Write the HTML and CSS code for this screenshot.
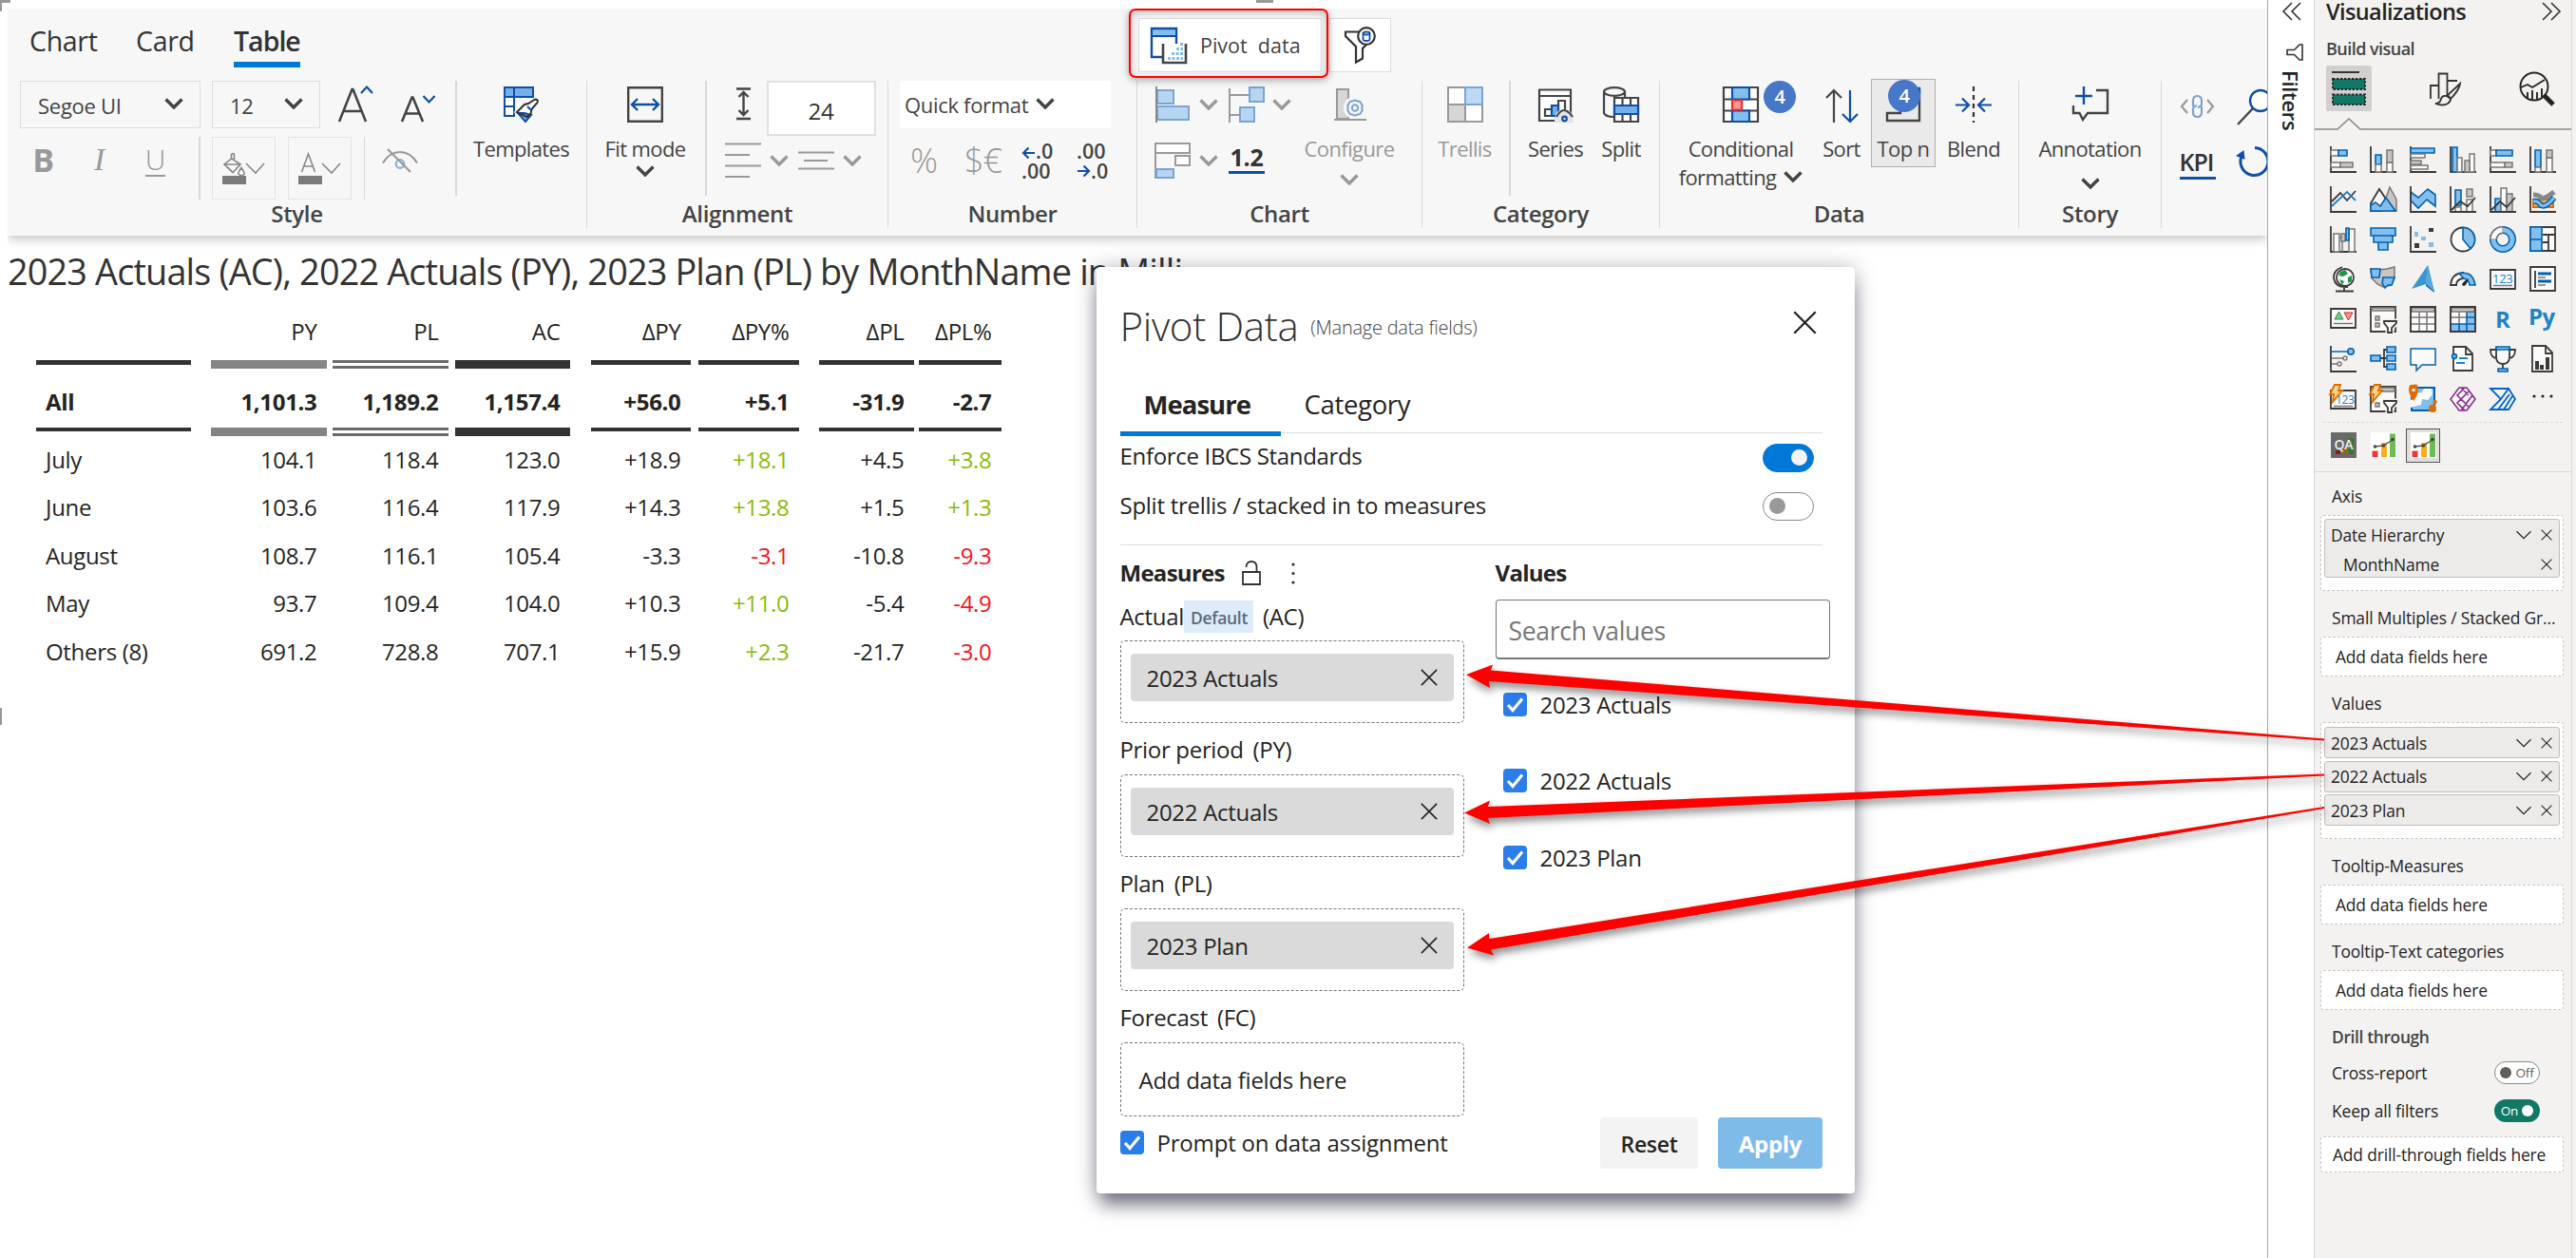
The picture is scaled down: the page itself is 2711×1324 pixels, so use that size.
FILE: index.html
```html
<!DOCTYPE html>
<html lang="en">
<head>
<meta charset="utf-8">
<title>Pivot data</title>
<link rel="stylesheet" href="styles.css">
</head>
<body>
<svg class="defs" aria-hidden="true">
  <symbol id="chev" viewBox="0 0 20 12"><path d="M1.5 1.5 10 10 18.5 1.5" fill="none" stroke="currentColor" stroke-width="3.4"/></symbol>
  <symbol id="chev-thin" viewBox="0 0 20 12"><path d="M1 1.5 10 10.5 19 1.5" fill="none" stroke="currentColor" stroke-width="1.4"/></symbol>
  <symbol id="cross" viewBox="0 0 20 20"><path d="M1 1 19 19M19 1 1 19" fill="none" stroke="currentColor" stroke-width="1.8"/></symbol>
  <symbol id="check" viewBox="0 0 25 25"><rect width="25" height="25" rx="4" fill="#2b7de9"/><path d="M5 13l5 5.5L20 6.5" fill="none" stroke="#fff" stroke-width="3.2"/></symbol>
  <symbol id="bars3" viewBox="0 0 27 27"><path d="M0 0h27v27H0z" fill="#fff"/><path d="M1.500 19.500h6V26h-6z" fill="#e8383a"/><path d="M11 11h6v15h-6z" fill="#f7ae1d"/><path d="M20 1.500h6V26h-6z" fill="#6cbb55"/><path d="M4 15l9-1 10-6" stroke="#555" stroke-width="1.400" fill="none"/><g fill="#444"><circle cx="4.500" cy="15" r="1.800"/><circle cx="13.500" cy="14" r="1.800"/><circle cx="23" cy="7.500" r="1.800"/></g></symbol>
</svg>

<div class="app">
  <main class="report">
    <i class="handle h1"></i><i class="handle h2"></i><i class="handle h3"></i><i class="handle h4"></i>
    <section class="ribbon">
      <div class="topbar">
        <nav class="tabs"><a class="t1">Chart</a><a class="t2">Card</a><a class="t3 on">Table</a></nav>
        <button class="pivot-btn">
          <svg width="38" height="38" fill="none"><path d="M27 17V1H1v30h11" stroke="#0f4fa8" stroke-width="2.4" fill="#fff"/><path d="M2 2h24v7H2z" fill="#83beec"/><path d="M1 9h26M1 1.2h26" stroke="#0f4fa8" stroke-width="2"/><path d="M13 17v20h24V17" stroke="#444" stroke-width="2.6" fill="#fff"/><path d="M18 32.500h16M22 27.500h12M27 22.500h7M31 17.500h3" stroke="#83beec" stroke-width="3" stroke-dasharray="3 1.500"/></svg>
          <span>Pivot&nbsp; data</span>
          <i class="highlight"></i>
        </button>
        <button class="filter-btn"><svg width="36" height="40" fill="none" stroke="#333" stroke-width="2.2"><path d="M18 5.500H2V10l11 11v16.500l7-4V23l4-4"/><circle cx="24" cy="10" r="8.800" fill="#fff"/><g stroke="#0f4fa8" stroke-width="1.800"><ellipse cx="24" cy="7" rx="3.500" ry="1.500"/><path d="M20.500 7v6.500c0 2 7 2 7 0V7"/></g></svg></button>
      </div>
      <div class="groups">
        <div class="group g-style">
          <div class="tools">
            <div class="stylebox">
              <div class="row">
                <div class="select s1"><span>Segoe UI</span><svg class="chev"><use href="#chev"/></svg></div>
                <div class="select s2"><span>12</span><svg class="chev"><use href="#chev"/></svg></div>
                <svg class="sizes" width="110" height="44" fill="none" stroke="#444" stroke-width="2.600"><path d="M7 43 20.500 9h1L35 43M11.500 32h19"/><path d="M73 43 83.500 17.500h1L95 43M76.500 34.500h15"/><g stroke="#0f4fa8" stroke-width="2.200"><path d="M30 13l6-6.500 6 6.500M95.500 16l6 6.500 6-6.500"/></g></svg>
              </div>
              <div class="row row2">
                <b class="fmt">B</b><i class="fmt it">I</i><span class="fmt un">U</span>
                <i class="sep short"></i>
                <div class="swatch"><svg width="46" height="34" fill="none" stroke="#888" stroke-width="1.600"><path d="M1 24h25v9H1z" fill="#7b7b7b" stroke="none"/><path d="M11 19 3 12 10.500 6V1.500q2-2 3 0V9M3 12h17L12 20.500 3 12M11 6l9 6"/><path d="M21 15.500q-3.500 5-3 6.500 3 3.500 6 0 .5-1.500-3-6.500z" fill="#fff"/><path d="M26 11l10 10 9-10"/></svg></div>
                <div class="swatch"><svg width="46" height="34" fill="none" stroke="#888" stroke-width="1.600"><path d="M1 24h25v9H1z" fill="#7b7b7b" stroke="none"/><path d="M4.500 20 11.500 1 18.500 20M7 14h9.500M26 11l10 10 9-10"/></svg></div>
                <i class="sep short"></i>
                <svg class="eye" width="38" height="26" fill="none" stroke="#999" stroke-width="2.200"><path d="M1 15.500Q8 4 19 4t18 11.500"/><circle cx="19" cy="16.500" r="4.300" stroke="#8ab0dc"/><path d="M6 1l24 24"/></svg>
              </div>
            </div>
            <i class="sep"></i>
            <div class="cell w137"><svg width="38" height="38" fill="none" stroke="#0f4fa8" stroke-width="2"><path d="M1 1h30v10H1z" fill="#74b0e8"/><path d="M1 11h10v20H1zM1 21h10M11 1v10" fill="#fff"/><path d="M1 1h10v10H1z"/><path d="M14 27 31 14l3 0 2 2-8 9-8 6z" fill="#fff" stroke="#fff" stroke-width="4"/><path d="M15 28l8 9 6-7-7-2z" fill="#74b0e8"/><path d="M14 27l8-8 4-1 7-4.500q4 0 2.500 3.500L29.500 24l-1 5-4 3z" stroke="#333"/><path d="M25 21l4 4" /></svg><span>Templates</span></div>
          </div>
          <h4>Style</h4>
        </div>
        <div class="group g-align">
          <div class="tools">
            <div class="cell w124"><svg width="38" height="38" fill="none" stroke="#444" stroke-width="2.400"><path d="M1.200 1.200h35.600v35.600H1.200z"/><g stroke="#0f4fa8"><path d="M5 19h28M11 13l-6 6 6 6M27 13l6 6-6 6"/></g></svg><span>Fit mode</span><svg class="chev"><use href="#chev"/></svg></div>
            <i class="sep"></i>
            <div class="alignbox">
              <div class="row">
                <svg width="38" height="46" fill="none" stroke="#444" stroke-width="2.400"><path d="M12 8.500h15M12 40h15M19.500 12v24M14.500 17l5-5 5 5M14.500 31l5 5 5-5"/></svg>
                <div class="num">24</div>
              </div>
              <div class="row r2">
                <svg width="38" height="38" stroke="#999" stroke-width="2.200"><path d="M0 1.500h38M0 13h26M0 24.500h38M0 36h26"/></svg><svg class="chev dim"><use href="#chev"/></svg>
                <svg class="ml" width="38" height="38" stroke="#999" stroke-width="2.200"><path d="M0 10.500h38M6 19h25M0 27.500h38"/></svg><svg class="chev dim"><use href="#chev"/></svg>
              </div>
            </div>
          </div>
          <h4>Alignment</h4>
        </div>
        <div class="group g-number">
          <div class="tools col">
            <div class="quick">Quick format<svg class="chev"><use href="#chev"/></svg></div>
            <div class="row numrow">
              <span class="pct">%</span><span class="cur">$€</span>
              <svg width="34" height="38" fill="none" stroke="#0f4fa8" stroke-width="2.200"><path d="M14 10H2M7.500 4.500 2 10l5.500 5.500"/><text x="15" y="16">.0</text><text x="0" y="37">.00</text></svg>
              <svg class="m24" width="34" height="38" fill="none" stroke="#0f4fa8" stroke-width="2.200"><path d="M1 29h12M7.500 23.500 13 29l-5.500 5.500"/><text x="0" y="16">.00</text><text x="15" y="37">.0</text></svg>
            </div>
          </div>
          <h4>Number</h4>
        </div>
        <div class="group g-chart">
          <div class="tools">
            <div class="chartgrid">
              <svg width="38" height="38" fill="#b5d5f2" stroke="#7ba3d4" stroke-width="2"><path d="M3 4h17v14H3zM3 21h33v14H3z"/><path d="M2 0v38" stroke="#888"/></svg><svg class="chev dim"><use href="#chev"/></svg>
              <svg width="38" height="38" fill="#b5d5f2" stroke="#7ba3d4" stroke-width="2"><path d="M1 2v36M1 9h21M1 30h11" stroke="#999"/><path d="M22 1h15v15H22zM12 22h15v15H12z"/></svg><svg class="chev dim"><use href="#chev"/></svg>
              <svg width="38" height="38" fill="#fff" stroke="#999" stroke-width="2"><path d="M1 1h36v10H1zM22 14h15v10H22zM1 0v38"/><path d="M2 28h18v9H2z" fill="#b5d5f2" stroke="#7ba3d4"/></svg><svg class="chev dim"><use href="#chev"/></svg>
              <b class="onetwo">1.2</b>
            </div>
            <div class="cell w108 dimmed"><svg width="38" height="38" fill="none" stroke="#999" stroke-width="2"><path d="M6 3h12v31H6z" fill="#d6d6d6"/><circle cx="25" cy="22.500" r="12" fill="#f7f7f7" stroke="none"/><path d="M3 35h34"/><g stroke="#7ba3d4"><circle cx="25" cy="22.500" r="3.200"/><path d="M22.500 15.500q2.500-2 5 0 3-.5 4 2.500 2 2 .7 4.500 1.300 2.500-.7 4.500-1 3-4 2.500-2.500 2-5 0-3 .5-4-2.500-2-2-.7-4.500-1.300-2.500.7-4.500 1-3 4-2.500z"/></g></svg><span>Configure</span><svg class="chev mt12"><use href="#chev"/></svg></div>
          </div>
          <h4>Chart</h4>
        </div>
        <div class="group g-cat">
          <div class="tools">
            <div class="cell w91 dimmed"><svg width="38" height="38" fill="#fff" stroke="#999" stroke-width="2"><path d="M1 1h18v18H1zM19 19h18v18H19z"/><path d="M1 19h18v18H1z" fill="#d6d6d6"/><path d="M19 1h18v18H19z" fill="#bcdaf5" stroke="#7ba3d4"/></svg><span>Trellis</span></div>
            <i class="sep"></i>
            <div class="cell w69 ml13"><svg width="38" height="38" fill="none" stroke="#444" stroke-width="2.200"><path d="M2 3.500h33V36H2zM2 10h33" fill="#fff"/><path d="M8 24h7v7H8zM22 15h7v16h-7z"/><path d="M15 20h7v11h-7z" fill="#74b0e8" stroke="#0f4fa8"/><path d="M18 38q0-14 10-14t10 14z" fill="#e4e4e4" stroke="none"/><path d="M20 32q4-7 8-7t9 7"/><circle cx="28.500" cy="34" r="2.300" stroke="#0f4fa8"/></svg><span>Series</span></div>
            <div class="cell w69"><svg width="38" height="38" fill="none" stroke="#444" stroke-width="2.200"><ellipse cx="12" cy="5.500" rx="11" ry="4.300"/><path d="M1 5.500V28q2 4 10 4M23 5.500V12"/><path d="M12 12h25v25H12zM20.500 12v25M29 12v25" fill="#fff"/><path d="M12 20h25v9H12z" fill="#74b0e8" stroke="#0f4fa8"/></svg><span>Split</span></div>
          </div>
          <h4>Category</h4>
        </div>
        <div class="group g-data">
          <div class="tools">
            <div class="cell w170 cond"><span class="icon"><svg width="38" height="38" fill="#fff" stroke="#444" stroke-width="2.200"><path d="M1 1h36v36H1zM1 13.500h36M1 25.500h36"/><path d="M10 1h18v12.500H10zM10 25.500h18V37H10z" fill="#83beec" stroke="#0f4fa8"/><path d="M10 14.500h10v10H10z" fill="#ff9494" stroke="#e8322f"/></svg><b class="badge b1">4</b></span><span>Conditional</span><span class="second">formatting<svg class="chev"><use href="#chev"/></svg></span></div>
            <div class="cell w42"><svg width="38" height="38" fill="none" stroke="#444" stroke-width="2.200"><path d="M11 38V4M3 12l8-8 8 8"/><path d="M28 4v32M20 29l8 8 8-8" stroke="#0f4fa8"/></svg><span>Sort</span></div>
            <div class="cell topn"><span class="icon"><svg width="38" height="38" fill="none" stroke="#444" stroke-width="2.400"><path d="M36 4v32H2v-8h14v-8h8"/><path d="M32 2h4v6" stroke="#0f4fa8"/></svg><b class="badge b2">4</b></span><span>Top n</span></div>
            <div class="cell w68"><svg width="38" height="38" fill="none" stroke="#0f4fa8" stroke-width="2.200"><path d="M0 19.500h13M7 12.500l7 7-7 7M38 19.500H25M31 12.500l-7 7 7 7"/><path d="M19 0v38" stroke="#333" stroke-dasharray="5 4"/></svg><span>Blend</span></div>
          </div>
          <h4>Data</h4>
        </div>
        <div class="group g-story">
          <div class="tools"><div class="cell w149"><svg width="38" height="38" fill="none" stroke="#444" stroke-width="2.400"><path d="M25 4h12v24H16l-5 7-3.500-7H1v-8"/><path d="M3 10h18M12 0v19" stroke="#0f4fa8"/></svg><span>Annotation</span><svg class="chev mt16"><use href="#chev"/></svg></div></div>
          <h4>Story</h4>
        </div>
        <div class="g-last">
          <svg width="38" height="26" fill="none" stroke="#999" stroke-width="2.200"><path d="M8 5l-6 7 6 7M29 5l6 7-6 7"/><path d="M15.500 12.500q-2-1-1.500-4V6q0-5 4.500-5T23 6v3q0 3-4 4M21.500 11.500q2 1 1.500 4V18q0 5-4.500 5T14 18v-3q0-3 4-4" stroke="#7ba3d4"/></svg>
          <svg width="36" height="38" fill="none" stroke="#0f4fa8" stroke-width="2.400"><circle cx="26" cy="12" r="11" fill="#fff"/><path d="M18 20 2 37" stroke="#444"/></svg>
          <b class="kpi">KPI</b>
          <svg width="36" height="36" fill="none" stroke="#0f4fa8" stroke-width="3"><path d="M20 2.500a14.500 14.500 0 1 1-14 9"/><path d="M0 11l8.500-6 1 10z" fill="#0f4fa8" stroke="none"/></svg>
        </div>
      </div>
    </section>

    <h1 class="chart-title">2023 Actuals (AC), 2022 Actuals (PY), 2023 Plan (PL) by MonthName in Milli...</h1>

    <div class="grid">
      <div class="tr head"><span></span><span>PY</span><span>PL</span><span>AC</span><span>ΔPY</span><span>ΔPY%</span><span>ΔPL</span><span>ΔPL%</span></div>
      <div class="tr bars"><i></i><i class="py"></i><i class="pl"></i><i class="ac"></i><i></i><i></i><i></i><i></i></div>
      <div class="tr all"><span>All</span><span>1,101.3</span><span>1,189.2</span><span>1,157.4</span><span>+56.0</span><span>+5.1</span><span>-31.9</span><span>-2.7</span></div>
      <div class="tr bars"><i></i><i class="py"></i><i class="pl"></i><i class="ac"></i><i></i><i></i><i></i><i></i></div>
      <div class="tr"><span>July</span><span>104.1</span><span>118.4</span><span>123.0</span><span>+18.9</span><span class="g">+18.1</span><span>+4.5</span><span class="g">+3.8</span></div>
      <div class="tr"><span>June</span><span>103.6</span><span>116.4</span><span>117.9</span><span>+14.3</span><span class="g">+13.8</span><span>+1.5</span><span class="g">+1.3</span></div>
      <div class="tr"><span>August</span><span>108.7</span><span>116.1</span><span>105.4</span><span>-3.3</span><span class="r">-3.1</span><span>-10.8</span><span class="r">-9.3</span></div>
      <div class="tr"><span>May</span><span>93.7</span><span>109.4</span><span>104.0</span><span>+10.3</span><span class="g">+11.0</span><span>-5.4</span><span class="r">-4.9</span></div>
      <div class="tr"><span>Others (8)</span><span>691.2</span><span>728.8</span><span>707.1</span><span>+15.9</span><span class="g">+2.3</span><span>-21.7</span><span class="r">-3.0</span></div>
    </div>

    <section class="modal">
      <header><h2>Pivot Data</h2><small>(Manage data fields)</small><svg class="close"><use href="#cross"/></svg></header>
      <nav class="mtabs"><a class="on">Measure</a><a>Category</a></nav>
      <div class="opt"><span>Enforce IBCS Standards</span><i class="toggle on"></i></div>
      <div class="opt o2"><span>Split trellis / stacked in to measures</span><i class="toggle"></i></div>
      <div class="cols">
        <div class="left">
          <h3>Measures
            <svg class="lock" width="20" height="26" fill="none" stroke="#333" stroke-width="1.800"><path d="M1 12h18v13H1zM4.500 7q0-6 5.500-6t5.500 6v5"/></svg>
            <svg class="dots" width="4" height="26" fill="#333"><circle cx="2" cy="4" r="1.600"/><circle cx="2" cy="13.500" r="1.600"/><circle cx="2" cy="23" r="1.600"/></svg></h3>
          <div class="lab l1">Actual<em>Default</em><span>(AC)</span></div>
          <div class="drop d1"><div class="chip">2023 Actuals<svg><use href="#cross"/></svg></div></div>
          <div class="lab">Prior period<span>(PY)</span></div>
          <div class="drop"><div class="chip">2022 Actuals<svg><use href="#cross"/></svg></div></div>
          <div class="lab">Plan<span>(PL)</span></div>
          <div class="drop"><div class="chip">2023 Plan<svg><use href="#cross"/></svg></div></div>
          <div class="lab">Forecast<span>(FC)</span></div>
          <div class="drop d4"><p>Add data fields here</p></div>
        </div>
        <div class="right">
          <h3>Values</h3>
          <div class="search">Search values</div>
          <label><svg><use href="#check"/></svg>2023 Actuals</label>
          <label><svg><use href="#check"/></svg>2022 Actuals</label>
          <label><svg><use href="#check"/></svg>2023 Plan</label>
        </div>
      </div>
      <footer><label><svg><use href="#check"/></svg>Prompt on data assignment</label><button class="reset">Reset</button><button class="apply">Apply</button></footer>
    </section>
  </main>

  <aside class="filters">
    <svg width="20" height="20" fill="none" stroke="#333" stroke-width="1.600"><path d="M10 1 1 10l9 9M19 1l-9 9 9 9"/></svg>
    <svg class="ff" width="18" height="18" fill="none" stroke="#333" stroke-width="1.600"><path d="M17 1v16h-3L8.500 11.500H1v-5h7.500L14 1z"/></svg>
    <span>Filters</span>
  </aside>

  <aside class="viz">
    <div class="vhead"><h2>Visualizations</h2><svg width="20" height="20" fill="none" stroke="#333" stroke-width="1.600"><path d="M1 1l9 9-9 9M10 1l9 9-9 9"/></svg></div>
    <div class="build">Build visual</div>
    <div class="vtabs">
      <div class="vt on"><svg width="48" height="48"><path d="M6 7h29" stroke="#252423" stroke-width="1.800"/><path d="M7 14h34v11H7zM7 30.500h34v10.500H7z" fill="#117865" stroke="#252423" stroke-width="1.800" stroke-dasharray="2.400 1.600"/></svg></div>
      <div class="vt"><svg width="36" height="36" fill="none" stroke="#333" stroke-width="1.800"><path d="M2 28V14h8.500V1.500h9V25M10.500 14v14M19.500 9H30"/><path d="M33 12 20 24l3 4Q32 19 33 12z" fill="#f3f2f1"/><path d="M19 25q-5-1-6 3-1 5-6 5 8 3 13 0 3-2 3-5z" fill="#f3f2f1"/></svg></div>
      <div class="vt"><svg width="38" height="38" fill="none" stroke="#252423" stroke-width="1.900"><circle cx="16" cy="16" r="14.500"/><path d="M2 17l7-3 5 3L27 9M9 28v-6M14 30V20M19 30V22M24 27v-9"/><path d="M26 25l10 10" stroke-width="5"/></svg></div>
    </div>
    <svg class="notch" width="270" height="14" fill="none" stroke="#8a8886" stroke-width="1.600"><path d="M0 12h24L36 1l12 11h222"/></svg>
    <div class="icons">
      <svg><path class="k" d="M1 0v27h27"/><path class="w" d="M1 4h8v6H1zM1 17h10v5H1z"/><path class="b" d="M9 4h9v6H9z"/><path class="g" d="M11 17h13v5H11z"/></svg>
      <svg><path class="k" d="M1 0v27h27"/><path class="b" d="M6 9h6v10H6z"/><path class="w" d="M6 19h6v8H6zM18 17h6v10h-6z"/><path class="g" d="M18 4h6v13h-6z"/></svg>
      <svg><path class="k" d="M1 0v27h27"/><path class="b" d="M1 2h25v5H1z"/><path class="w" d="M1 8h15v4H1z"/><path class="g" d="M1 15h11v4H1z"/><path class="w" d="M1 20h18v4H1z"/></svg>
      <svg><path class="k" d="M1 0v27h27"/><path class="b" d="M3 1h5v26H3z"/><path class="w" d="M8 12h5v15H8zM21 8h5v19h-5z"/><path class="g" d="M16 15h5v12h-5z"/></svg>
      <svg><path class="k" d="M1 0v27h27"/><path class="w" d="M1 4h6v6H1zM1 17h15v5H1z"/><path class="b" d="M7 4h17v6H7z"/><path class="g" d="M16 17h8v5h-8z"/></svg>
      <svg><path class="k" d="M1 0v27h27"/><path class="b" d="M6 4h6v18H6z"/><path class="w" d="M6 22h6v5H6zM18 12h6v15h-6z"/><path class="g" d="M18 4h6v8h-6z"/></svg>

      <svg><path class="k" d="M1 0v27h27M2 16 11 7l7 8L27 5"/><path class="bl" d="M2 21 18 6l9 9"/></svg>
      <svg><path class="g" d="M21 1l7 13v12H12z"/><path class="w k" d="M1 18 10 3l10 15-8 8H1z"/><path class="b" d="M1 26v-6l5-3 5 4 6-9 10 14z"/></svg>
      <svg><path class="b" d="M1 6l8 6 10-9 8 6v12l-9-7-9 9-8-8z"/><path class="k" d="M1 0v27h27"/></svg>
      <svg><path class="b" d="M6 4h6v16H6z"/><path class="g" d="M18 3h6v8h-6z"/><path class="w" d="M6 22h6v5H6zM18 14h6v13h-6z"/><path class="k" d="M1 0v27h27M2 25l9-9 8 5 8-9"/></svg>
      <svg><path class="b" d="M6 13h6v14H6z"/><path class="w" d="M12 2h6v25h-6z"/><path class="g" d="M18 8h6v19h-6z"/><path class="k" d="M1 0v27h27M2 25l9-9 7 6 9-10"/></svg>
      <svg><path class="or" d="M4 14h21v8H4zM4 18h21"/><path d="M4 9q6 0 10 4 6-2 12-7" stroke="#888" stroke-width="5"/><path d="M4 16q5-1 8 4 5 3 14-8" stroke="#0063b1" stroke-width="6"/><path d="M4 16q5-1 8 4 5 3 14-8" stroke="#83beec" stroke-width="3"/><path class="k" d="M1 0v27h27"/></svg>

      <svg><path class="k" d="M1 0v27h27"/><path class="w" d="M4 8h6v19H4zM10 12h3v15M20 3h6v24h-6z"/><path class="g" d="M12 8h4v8h-4z"/><path class="b" d="M17 2h3v13h-3z"/></svg>
      <svg><path class="b" d="M1 2h26v8H1zM4 10h20v7H4zM9 17h10v8H9z"/></svg>
      <svg><path class="k" d="M1 0v27h27"/><path d="M20 2h5v4h-5zM5 18h5v5H5z" fill="#3b3a39"/><path d="M5 6h4v5H5zM12 11h5v4h-5zM20 17h5v5h-5z" fill="#83beec"/></svg>
      <svg><circle class="w k" cx="14" cy="14" r="12.500"/><path class="b" d="M14 14V1.500A12.500 12.500 0 0 1 22 23.500z"/></svg>
      <svg><circle cx="14" cy="14" r="10" stroke="#0063b1" stroke-width="8"/><circle cx="14" cy="14" r="10" stroke="#83beec" stroke-width="5"/><path d="M4 14A10 10 0 0 1 14 4" stroke="#797775" stroke-width="8"/><path d="M4 13.500A10 10 0 0 1 13.500 4" stroke="#fafafa" stroke-width="5"/></svg>
      <svg><path class="w k" d="M1 1h26v25H1zM14 9h13M20 9v17M14 17h6"/><path class="b" d="M1 1h12v13H1zM1 14h12v12H1z"/></svg>

      <svg><circle class="w k" cx="16" cy="12" r="9"/><path d="M11 6l5-2 3 4-5 3-5-1zM19 12l4-2v6l-4 2zM10 14l5 2-2 4z" fill="#1e9447"/><path class="k" d="M13 1Q3 5 4 13q2 10 15 9M15 22v4M6 26.500h19"/></svg>
      <svg><path class="g" d="M1 3l8 1 9-1 8-2v11l-3 8-9 2-6-3-6-6z"/><path class="b" d="M1 3h10l-1 9-8 0zM14 12h12l-3 8-4 0-3 3-3-5z"/></svg>
      <svg><path d="M19-1 26 28l-9-7z" fill="#0063b1"/><path d="M19-1 2 24l15-5z" fill="#3a96d0"/><path d="M19-1 17 19l9 8z" fill="#55a9dd"/></svg>
      <svg><path class="w k" d="M1 20Q2 8 14 7v6q-7 1-7 7z"/><path class="b" d="M10 8q14-4 17 12h-6q0-5-6-7z"/><path d="M13 20q0-3 7-7-2 7-5 8z" fill="#252423"/></svg>
      <svg><path class="w k" d="M1 4h26v20H1z"/><text x="3" y="17.500" font-size="13">123</text><path class="gl" d="M4 20.500h20"/></svg>
      <svg><path class="w k" d="M1 1h26v25H1z"/><path class="k" d="M6 5v18"/><path class="bl th" d="M9 8h14M9 16h14"/><path class="gl" d="M9 12h8M9 20h8"/></svg>

      <svg><path class="w k" d="M1 3h26v20H1z"/><path d="M5 14 9.500 6l4.500 8z" fill="#7cc68d" stroke="#1e9447"/><path d="M15 7h9l-4.500 8z" fill="#ff8f8f" stroke="#d22"/><path class="gl" d="M4 18.500h20"/></svg>
      <svg><path class="w k" d="M1 1h26v26H1z"/><path class="g" d="M2 2h24v3H2zM6 11h4v4H6zM6 18h4v4H6z"/><path class="halo" d="M15 16h13v2l-5 5v5h-4v-5l-4-5z"/><path class="w k" d="M15 16h13v2l-5 5v5h-4v-5l-4-5z"/></svg>
      <svg><path class="w" d="M1 1h26v26H1zM10 6v20M18 6v20M1 12h26M1 19h26"/><path class="g" d="M2 2h24v4H2z"/><path class="k" d="M1 1h26v26H1z"/></svg>
      <svg><path class="w" d="M1 1h26v26H1zM10 6v20M1 12h26"/><path class="b" d="M18 6h9v21H1v-8h17zM10 19v8M18 19v8M18 12h9M18 19h9"/><path class="g" d="M2 2h24v4H2z"/><path class="k" d="M1 1h26v26H1z"/></svg>
      <svg><text x="6" y="22.500" font-size="24" font-weight="700">R</text></svg>
      <svg><text x="-1" y="20" font-size="24" font-weight="700">Py</text></svg>

      <svg><path class="k" d="M1 0v27h27"/><path class="bl" d="M2 6h18"/><circle class="b" cx="22" cy="6" r="3.200"/><path class="gl" d="M2 13h12M2 19h6"/><circle class="w" cx="16" cy="13" r="2"/><circle class="w" cx="10" cy="19" r="2"/></svg>
      <svg><path class="k" d="M11 13h6M24 4h-9v18h9"/><path class="b" d="M1 10h10v6H1zM18 1h9v6h-9zM18 10h9v6h-9zM18 19h9v6h-9z"/></svg>
      <svg><path class="w ink" d="M1 3h26v17H13l-6 6v-6H1z"/></svg>
      <svg><path class="w k" d="M4 1h13l7 7v18H4zM17 1v8h7"/><path class="bl" d="M10 13h9M7 18h9"/><circle class="b" cx="5" cy="11" r="2.400"/></svg>
      <svg><path class="w k" d="M7 4H1q0 9 7 9M21 4h6q0 9-7 9M7 2h14v11q-1 6-7 6t-7-6zM14 19v5"/><path class="b" d="M7 1h14v3H7zM9 24h10v3H9z"/></svg>
      <svg><path class="w k" d="M3 0h14l7 7v20H3zM17 0v8h7"/><path d="M6 16h4v9H6zM11 20h4v5h-4zM17 12h4v13h-4z" fill="#3b3a39"/></svg>

      <svg><path class="w k" d="M1 24V5h26v19z"/><text x="6" y="18.500" font-size="12">123</text><path class="gl" d="M4 21.500h20"/><path class="bolt" d="M5-1h6L9 5h4L3 17l1-8H0z"/></svg>
      <svg><path class="w k" d="M1 1h26v26H1z"/><path class="g" d="M2 2h24v4H2zM6 18h4v4H6z"/><path class="halo" d="M15 16h13v2l-5 5v5h-4v-5l-4-5z"/><path class="w k" d="M15 16h13v2l-5 5v5h-4v-5l-4-5z"/><path class="bolt" d="M5-1h6L9 5h4L3 17l1-8H0z"/></svg>
      <svg><path d="M2 2h24v24H2z" fill="#83beec" stroke="#0063b1" stroke-width="2"/><path d="M9 13l6 1 1-6 4-1 7-2v8l-4 2-2 5-6 1-2 4H5l-1-6z" fill="#fafafa" transform="rotate(180 14 14)"/><path d="M4-1q5-2 5 5 0 5-5 12-5-7-5-12 0-6 5-5z" fill="#e06c00"/><circle cx="4" cy="4.500" r="1.800" fill="#fff"/><circle cx="24" cy="24" r="4" fill="#e06c00"/><circle cx="26.500" cy="17" r="2.200" fill="#e06c00"/></svg>
      <svg stroke="#8a2f92" stroke-width="1.600"><path d="M10 2h8l9 12-9 12h-8L1 14zM12 2 20 10M16 2 8 10l12 12M20 6 8 18l8 8M24 10 12 26"/></svg>
      <svg stroke="#0063d1" stroke-width="1.800"><path d="M1 3h19l7 11-7 11H1l11-11zM12 14 20 3M9 25l12-16M15 25l9-14"/></svg>
      <svg><g fill="#252423"><circle cx="5" cy="11" r="1.600"/><circle cx="14" cy="11" r="1.600"/><circle cx="23" cy="11" r="1.600"/></g></svg>
    </div>
    <div class="custom">
      <span><svg><path d="M0 0h27v27H0z" fill="#6a6a6a"/><path d="M5 19h5v4H5z" fill="#8a1c1c"/><path d="M12 16h5v7h-5z" fill="#8a6a10"/><path d="M19 6h5v17h-5z" fill="#2f7a2f"/><text x="3.500" y="18" font-size="14" class="qa">QA</text></svg></span>
      <span><svg><use href="#bars3"/></svg></span>
      <span class="sel"><svg><use href="#bars3"/></svg></span>
    </div>
    <div class="wells">
      <h5>Axis</h5>
      <div class="well wa"><div class="field tall"><p>Date Hierarchy<svg class="v"><use href="#chev-thin"/></svg><svg class="x"><use href="#cross"/></svg></p><p class="sub">MonthName<svg class="x"><use href="#cross"/></svg></p></div></div>
      <h5>Small Multiples / Stacked Gr...</h5>
      <div class="well empty">Add data fields here</div>
      <h5>Values</h5>
      <div class="well wv">
        <div class="field"><p>2023 Actuals<svg class="v"><use href="#chev-thin"/></svg><svg class="x"><use href="#cross"/></svg></p></div>
        <div class="field"><p>2022 Actuals<svg class="v"><use href="#chev-thin"/></svg><svg class="x"><use href="#cross"/></svg></p></div>
        <div class="field"><p>2023 Plan<svg class="v"><use href="#chev-thin"/></svg><svg class="x"><use href="#cross"/></svg></p></div>
      </div>
      <h5>Tooltip-Measures</h5>
      <div class="well empty">Add data fields here</div>
      <h5>Tooltip-Text categories</h5>
      <div class="well empty">Add data fields here</div>
      <h5 class="drill">Drill through</h5>
      <div class="sw"><span>Cross-report</span><b class="off"><i></i>Off</b></div>
      <div class="sw"><span>Keep all filters</span><b class="onn">On<i></i></b></div>
      <div class="well empty last">Add drill-through fields here</div>
    </div>
  </aside>
</div>

<svg class="arrows" width="2711" height="1324" fill="#f00">
  <polygon points="1543,710 1571,699.500 1569,705.500 2446,777.500 2446,779.500 1567,717 1568,724"/>
  <polygon points="1541,855.500 1568,842.500 1566,849 2446,814.500 2446,816.500 1566,861 1568,867"/>
  <polygon points="1544,997.500 1567,982 1567.500,988 2446,849 2446,851 1569,999.500 1572,1005.500"/>
</svg>
</body>
</html>
```
FILE: styles.css
```css
* { box-sizing: border-box; }
body { margin: 0; width: 2711px; height: 1324px; overflow: hidden; background: #fff; font-family: "Open Sans", "Noto Sans", sans-serif; color: #333; letter-spacing: -0.02em; }
h1, h2, h3, h4, h5, p { margin: 0; font-weight: 400; }
button { border: 0; padding: 0; font: inherit; letter-spacing: inherit; color: inherit; }
svg { display: block; flex: none; overflow: visible; }
.defs { position: absolute; width: 0; height: 0; }
.app { display: flex; height: 1324px; }
.report { position: relative; width: 2387px; flex: none; overflow: hidden; border-right: 1px solid #a6a6a6; padding: 9px 0 0 8px; }

.handle { position: absolute; background: #999; }
.h1 { left: 0; top: 0; width: 11px; height: 3px; }
.h2 { left: 0; top: 0; width: 2px; height: 12px; }
.h3 { left: 1322px; top: 0; width: 18px; height: 3px; }
.h4 { left: 0; top: 745px; width: 2px; height: 18px; }

/* ribbon */
.ribbon { height: 239px; background: #f7f7f7; box-shadow: 0 4px 10px rgba(0, 0, 0, .22); clip-path: inset(0 0 -20px 0); }
.topbar { display: flex; height: 76px; padding-left: 23px; }
.tabs { display: flex; width: 1167px; font-size: 28.5px; line-height: 62px; padding-top: 4px; }
.tabs a { height: 58px; line-height: 61px; }
.t1 { width: 112px; }
.t2 { width: 103px; }
.tabs .on { font-weight: 600; width: 70px; border-bottom: 6px solid #0078d7; letter-spacing: -.035em; }
.pivot-btn { position: relative; width: 193px; height: 57px; margin-top: 10px; background: #fff; border: 1.5px solid #dcdcdc; display: flex; align-items: center; padding-left: 12px; font-size: 21.5px; color: #444; }
.pivot-btn span { margin-left: 14px; white-space: nowrap; letter-spacing: 0; }
.highlight { position: absolute; left: -11px; top: -11px; width: 210px; height: 73px; border: 2px solid #f00; border-radius: 7px; box-shadow: 0 2px 8px rgba(0, 0, 0, .35), inset 0 2px 8px rgba(0, 0, 0, .25); }
.filter-btn { margin: 10px 0 0 8px; width: 65px; height: 57px; background: #fff; border: 1.5px solid #dcdcdc; display: flex; align-items: center; justify-content: center; }
.groups { display: flex; height: 155px; }
.group { display: flex; flex-direction: column; flex: none; border-right: 1.5px solid #d9d9d9; }
.group h4 { font-size: 24px; font-weight: 600; text-align: center; line-height: 34px; color: #444; padding-top: 1.5px; height: 34px; }
.g-style { width: 610px; }
.g-align { width: 317px; }
.g-number { width: 262px; }
.g-chart { width: 300px; }
.g-cat { width: 250px; }
.g-data { width: 378px; }
.g-story { width: 150px; }
.tools { display: flex; height: 121px; align-items: flex-start; }
.tools.col { flex-direction: column; }
.row { display: flex; }
.sep { width: 1.5px; height: 121px; background: #d9d9d9; flex: none; }
.sep.short { height: 66px; }
.chev { width: 20px; height: 12px; color: #444; }
.chev.dim { color: #999; }
.cell { display: flex; flex-direction: column; align-items: center; padding-top: 6px; font-size: 22px; line-height: 27px; color: #444; white-space: nowrap; flex: none; letter-spacing: -.028em; }
.cell span:not(.icon) { margin-top: 14px; }
.cell .chev { margin-top: 4px; }
.cell .mt12 { margin-top: 13px; }
.cell .mt16 { margin-top: 17px; }
.dimmed, .dimmed .chev { color: #999; }
.w137 { width: 136px; } .w124 { width: 122px; } .w124 + .sep { margin-left: 2px; } .w108 { width: 108px; } .w91 { width: 89px; } .w91 + .sep { margin-left: 2px; } .w69 { width: 69px; }
.w170 { width: 170px; } .w42 { width: 42px; } .w68 { width: 68px; margin-left: 6px; } .w149 { width: 149px; } .ml13 { margin-left: 13px; }
.stylebox { width: 471px; padding-left: 13px; }
.select { height: 50px; border: 1.5px solid #ddd; display: flex; align-items: center; justify-content: space-between; padding: 0 17px 0 18px; font-size: 22px; letter-spacing: -.012em; color: #444; }
.select .chev { margin-top: -2px; }
.select span { padding-top: 2px; }
.s1 { width: 190px; }
.s2 { width: 114px; margin-left: 12px; }
.sizes { margin-left: 13px; }
.row2 { margin-top: 9px; align-items: center; }
.fmt { width: 59px; text-align: center; color: #999; font-size: 34px; line-height: 40px; margin-top: -18px; font-weight: 300; }
b.fmt { font-weight: 700; margin-left: -5px; }
.it { font-family: "Liberation Serif", serif; font-style: italic; }
.un { text-decoration: underline; text-decoration-thickness: 2px; text-underline-offset: 5px; font-size: 30px; }
.un + .sep { margin-left: 16px; }
.swatch { width: 67px; height: 66px; border: 1.5px solid #e4e4e4; margin-left: 12.5px; padding: 16px 0 0 9px; }
.swatch + .sep { margin-left: 13px; }
.swatch + .swatch { margin-left: 12.5px; }
.eye { margin: -16px 0 0 18px; }
.alignbox { padding-left: 19px; }
.num { margin-left: 6px; width: 115px; height: 58px; border: 2px solid #e0e0e0; background: #fff; font-size: 24px; line-height: 59px; text-align: center; }
.r2 { margin-top: 7px; align-items: center; }
.r2 .chev { margin-left: 9px; }
.r2 .ml { margin-left: 10px; }
.quick { margin-left: 12px; width: 222px; height: 50px; background: #fff; display: flex; align-items: center; padding-left: 5px; font-size: 22px; gap: 8px; color: #444; line-height: 54px; white-space: nowrap; }
.quick .chev { margin-top: -2px; }
.numrow { margin: 16px 0 0 23px; line-height: 36px; color: #999; font-size: 36px; font-weight: 300; letter-spacing: -.03em; }
.pct { width: 57px; }
.cur { width: 60px; }
.numrow text { font-size: 21.5px; font-weight: 600; fill: #444; stroke: none; letter-spacing: 0; }
.m24 { margin-left: 24px; }
.chartgrid { display: grid; grid-template-columns: 47px 31px 46px 20px; row-gap: 21px; width: 169px; padding: 6px 0 0 18px; align-items: center; flex: none; }
.onetwo { font-size: 25px; font-weight: 700; line-height: 30px; border-bottom: 3px solid #0f4fa8; width: 38px; text-align: center; color: #333; margin-top: -5px; }
.icon { position: relative; display: block; }
.badge { position: absolute; width: 34px; height: 34px; border-radius: 50%; background: #4677c8; color: #fff; font-size: 20px; font-weight: 600; line-height: 34px; text-align: center; }
.b1 { left: 43px; top: -6px; }
.b2 { left: 3px; top: -7px; }
.cell span.second { display: flex; gap: 8px; margin-top: 3px; }
.cell .second .chev { margin-top: 7px; }
.topn { width: 68px; height: 93px; margin: -2px 0 0 10px; padding-top: 6.5px; background: #eaeaea; border: 1.5px solid #b0b0b0; }
.g-last { display: grid; grid-template-columns: 38px 36px; column-gap: 21px; padding: 9px 0 0 18.5px; align-content: start; row-gap: 21px; align-items: center; }
.kpi { font-size: 25px; font-weight: 600; line-height: 32px; border-bottom: 3px solid #0f4fa8; letter-spacing: -.04em; }

/* table */
.chart-title { font-size: 37.8px; line-height: 52px; margin: 12px 0 0 0; white-space: nowrap; letter-spacing: -.022em; color: #333; }
.grid { margin: 12px 0 0 30px; width: 1017px; font-size: 24px; color: #252423; }
.tr { display: grid; grid-template-columns: 163px 21px 122px 6px 122px 7px 121px 22px 105px 8px 106px 21px 100px 5px 87px; line-height: 50.6px; height: 50.6px; }
.tr > :nth-child(1) { grid-column: 1; }
.tr > :nth-child(2) { grid-column: 3; }
.tr > :nth-child(3) { grid-column: 5; }
.tr > :nth-child(4) { grid-column: 7; }
.tr > :nth-child(5) { grid-column: 9; }
.tr > :nth-child(6) { grid-column: 11; }
.tr > :nth-child(7) { grid-column: 13; }
.tr > :nth-child(8) { grid-column: 15; }
.tr span { text-align: right; padding-right: 10.5px; }
.tr span:first-child { text-align: left; padding-left: 10px; white-space: nowrap; }
.tr.head { height: 55px; line-height: 50px; }
.tr.bars { height: 9px; }
.tr.bars i { height: 4.5px; background: #333; }
.tr.bars .py { height: 9px; background: #848484; }
.tr.bars .ac { height: 9px; }
.tr.bars .pl { height: 9px; background: #fff; border: solid #6a6a6a; border-width: 3px 0; }
.tr.all { height: 61.5px; line-height: 70px; font-weight: 700; }
.g { color: #8cbb0a; }
.r { color: #f5131e; }

/* dialog */
.modal { position: absolute; left: 1154px; top: 281px; width: 798px; height: 975px; background: #fff; border-radius: 4px; box-shadow: 0 16px 18px -4px rgba(45, 45, 70, .6), 0 0 22px rgba(40, 40, 60, .3); padding: 0 34px 0 24.5px; font-size: 24px; color: #252423; }
.modal header { display: flex; align-items: center; height: 125px; }
.modal h2 { font-size: 42px; font-weight: 300; letter-spacing: -.008em; color: #333; margin-top: -2px; }
.modal small { font-size: 20px; font-weight: 300; margin: 2px 0 0 13px; letter-spacing: -.012em; color: #444; }
.close { width: 25px; height: 25px; margin-left: auto; margin-right: 6.5px; margin-top: -8px; }
.mtabs { display: flex; height: 50px; border-bottom: 1.5px solid #ddd; font-size: 27.5px; line-height: 40px; }
.mtabs a { height: 53px; padding: 0 25px; letter-spacing: -.012em; }
.mtabs .on { width: 169px; font-weight: 700; border-bottom: 5px solid #0078d7; letter-spacing: -.035em; }
.opt { display: flex; justify-content: space-between; padding-right: 9px; align-items: center; height: 52px; margin-top: 0; }
.opt span { margin-top: -6px; }
.o2 { height: 66px; padding-bottom: 15px; border-bottom: 1.5px solid #ddd; letter-spacing: -.011em; }
.o2 span { margin-top: -4px; }
.toggle { width: 54px; height: 30px; border-radius: 15px; border: 1.5px solid #888; padding: 5px 6px; }
.toggle::after { content: ""; display: block; width: 17px; height: 17px; border-radius: 50%; background: #999; }
.toggle.on { background: #0078d7; border-color: #0078d7; }
.toggle.on::after { background: #f3f3f3; margin-left: 23px; }
.cols { display: flex; }
.left { width: 395px; flex: none; }
.modal h3 { font-size: 24px; font-weight: 700; line-height: 34px; margin-top: 12px; display: flex; align-items: center; letter-spacing: -.03em; height: 34px; }
.lock { margin-left: 18px; }
.dots { margin-left: 32px; }
.lab { line-height: 34px; height: 26px; margin-top: 11px; display: flex; white-space: nowrap; }
.lab span { margin-left: 10px; }
.lab em { font-style: normal; font-size: 17.5px; font-weight: 600; background: #deecf9; color: #5b6b7b; padding: 0 6px 0 7px; height: 34px; line-height: 36px; }
.drop { width: 362px; height: 87px; border: 1.5px dashed #777; border-radius: 5px; padding: 13px 10px; margin-top: 17px; }
.left .l1 { margin-top: 12px; height: 34px; }
.left .d1 { margin-top: 8px; }
.left .d4 { height: 78px; padding: 0 19px; line-height: 77px; letter-spacing: -.012em; }
.chip { height: 50px; background: #dadada; border-radius: 4px; display: flex; align-items: center; justify-content: space-between; padding: 0 17px; letter-spacing: -.012em; }
.chip svg { width: 18px; height: 18px; }
.right { width: 352px; flex: none; margin-right: -10px; letter-spacing: -.012em; }
.search { width: 352px; height: 63px; margin-top: 11px; border: 1.5px solid #777; border-bottom-width: 2px; border-radius: 4px; font-size: 26.5px; line-height: 64px; padding-left: 13px; color: #777; }
.modal label { display: flex; align-items: center; gap: 14px; }
.right label { height: 36px; margin: 44.5px 0 0 8px; }
.right .search + label { margin-top: 29px; }
.modal label svg { width: 25px; height: 25px; }
.modal footer { display: flex; align-items: center; height: 55px; }
.modal footer label { flex: 1; letter-spacing: -.008em; }
.reset, .apply { height: 54px; border-radius: 4px; background: #f3f3f3; width: 103px; font-weight: 600; font-size: 23px; line-height: 56px; }
.apply { width: 110px; margin-left: 21px; background: #7fbbe9; color: #fff; font-weight: 700; font-size: 24px; }

/* filters strip */
.filters { width: 48px; flex: none; display: flex; flex-direction: column; padding: 2px 0 0 15px; }
.ff { margin: 24px 0 0 4px; }
.filters span { writing-mode: vertical-rl; font-weight: 600; font-size: 22px; line-height: 24px; margin: 10px 0 0 -3px; width: 24px; color: #252423; }

/* visualizations pane */
.viz { width: 272px; flex: none; background: #f3f2f1; border: solid #dad8d6; border-width: 0 1.5px; color: #252423; box-shadow: 5px 0 0 #f3f2f1; }
.vhead { display: flex; justify-content: space-between; height: 24px; padding: 0 11px 0 12px; }
.vhead h2 { font-size: 23.5px; font-weight: 600; line-height: 24px; letter-spacing: -.026em; }
.vhead svg { margin-top: 2px; }
.build { font-size: 18px; font-weight: 600; line-height: 26px; padding: 14px 0 0 12px; color: #444; letter-spacing: -.03em; }
.vtabs { display: flex; justify-content: space-between; padding: 5px 17px 0 12px; height: 53px; }
.vt.on { width: 48px; height: 48px; background: #d2d0ce; border-radius: 2px; }
.vt:nth-child(2) { margin-top: 7px; }
.vt:nth-child(3) { margin-top: 6px; }
.notch { margin-top: 7px; }
.icons { display: grid; grid-template-columns: repeat(6, 28px); gap: 14px; align-content: start; padding: 16px 0 0 16px; height: 306px; }
.icons svg { width: 28px; height: 28px; fill: none; }
.icons .k { stroke: #3b3a39; stroke-width: 1.8; }
.icons .w { fill: #fafafa; stroke: #797775; stroke-width: 1.5; }
.icons .w.k { stroke: #3b3a39; stroke-width: 1.8; }
.icons .ink { stroke: #0063b1; }
.icons .halo { stroke: #f3f2f1; stroke-width: 5; }
.icons .b { fill: #83beec; stroke: #0063b1; stroke-width: 1.6; }
.icons .g { fill: #c8c6c4; stroke: #797775; stroke-width: 1.5; }
.icons .bl { stroke: #1f7fc4; stroke-width: 1.8; }
.icons .th { stroke-width: 2.8; stroke: #0063b1; }
.icons .gl { stroke: #797775; stroke-width: 1.5; }
.icons .or { stroke: #e06c00; stroke-width: 2; fill: #f9b36a; }
.icons .bolt { fill: #fbd38a; stroke: #e06c00; stroke-width: 1.8; }
.icons text { fill: #2283c4; letter-spacing: -.02em; }
.custom { display: flex; height: 53px; gap: 6px; padding: 7px 0 0 12px; border-bottom: 1.5px solid #dad8d6; position: relative; }
.custom::before { content: ""; position: absolute; left: 9px; right: 9px; top: 0; border-top: 1.5px dashed #dad8d6; }
.custom span { width: 36px; height: 36px; padding: 4px 0 0 5px; }
.custom svg { width: 27px; height: 27px; }
.custom .sel { border: 1.5px solid #555; background: #e1dfdd; padding: 3px 0 0 4px; }
.qa { fill: #eee; font-weight: 600; }
.wells { padding: 11px 8px 0 6px; font-size: 17.4px; letter-spacing: -.008em; }
.wells h5 { font-size: 17.4px; line-height: 28px; height: 34px; padding: 0 0 0 12px; white-space: nowrap; }
.well { background: #fff; border: 1.5px dashed #c8c6c4; border-radius: 3px; }
.well.empty { height: 42px; line-height: 41px; padding-left: 15px; margin-bottom: 14px; white-space: nowrap; }
.field { background: #edebe9; border: 1.5px solid #c0bebc; border-radius: 3px; height: 33px; padding: 0 7px 0 6px; }
.field p { display: flex; align-items: center; height: 31px; }
.field .v { width: 18px; height: 10px; margin-left: auto; margin-right: 9px; }
.field .x { width: 12px; height: 12px; }
.field .sub { padding-left: 13px; }
.sub .x { margin-left: auto; }
.wa { height: 80px; padding: 3px; margin-bottom: 14px; }
.tall { height: 62px; }
.wv { height: 123px; padding: 4px 3px; margin-bottom: 14px; display: flex; flex-direction: column; gap: 2.5px; }
.wells .drill { font-weight: 600; color: #444; height: 32px; letter-spacing: -.02em; }
.sw { display: flex; justify-content: space-between; align-items: center; height: 40px; padding: 0 25px 0 12px; }
.sw b { width: 48px; height: 24px; border-radius: 12px; font-size: 13.5px; font-weight: 400; display: flex; align-items: center; justify-content: center; gap: 4px; }
.sw b i { width: 12px; height: 12px; border-radius: 50%; background: #605e5c; }
.off { border: 1.5px solid #8a8886; color: #605e5c; background: #fff; }
.onn { background: #117865; color: #fff; }
.sw .onn i { background: #fff; }
.well.last { height: 38px; line-height: 37px; padding-left: 12px; margin-top: 7px; }

.arrows { position: absolute; left: 0; top: 0; filter: drop-shadow(2px 5px 4px rgba(0, 0, 0, .45)); pointer-events: none; }
```
